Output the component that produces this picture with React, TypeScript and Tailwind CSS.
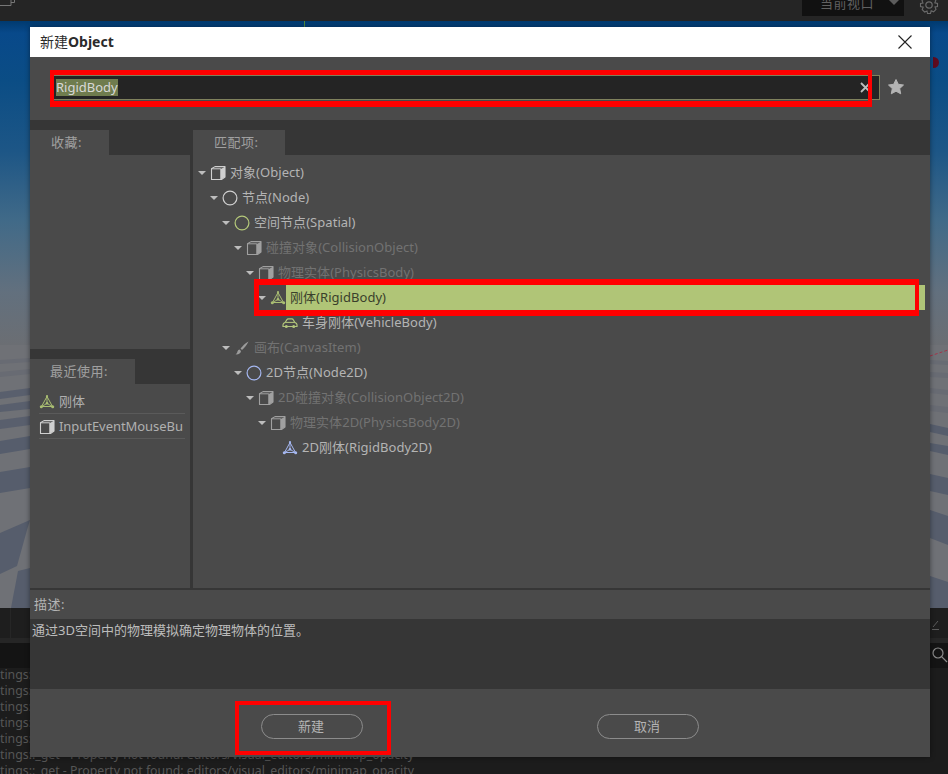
import React from "react";

const FONT = "[font-family:'Noto_Sans','Noto_Sans_CJK_SC',sans-serif]";

function Cube({ dim = false }: { dim?: boolean }) {
  const c = dim ? "#a0a0a0" : "#cfcfcf";
  return (
    <svg width="16" height="16" viewBox="0 0 16 16" className="shrink-0">
      <path d="M1.5 3.8 L5 1.6 H15 V12 L11.5 14.5 H1.5 Z" fill="none" stroke={c} strokeWidth="1.1" strokeLinejoin="round" />
      <path d="M10.8 4 L15 1.8 V12 L10.8 14.5 Z" fill={c} />
      <path d="M1.5 3.8 H10.8 V14.5" fill="none" stroke={c} strokeWidth="1" />
    </svg>
  );
}

function Ring({ color }: { color: string }) {
  return (
    <svg width="16" height="16" viewBox="0 0 16 16" className="shrink-0">
      <circle cx="8" cy="8" r="6.9" fill="none" stroke={color} strokeWidth="1.2" />
    </svg>
  );
}

function Rigid({ color }: { color: string }) {
  return (
    <svg width="16" height="16" viewBox="0 0 16 16" className="shrink-0">
      <path d="M8 2.5 L13.5 12.5 H2.5 Z" fill="none" stroke={color} strokeWidth="1" />
      <path d="M8 2.5 V9.5 M8 9.5 L2.5 12.5 M8 9.5 L13.5 12.5" stroke={color} strokeWidth="0.9" fill="none" />
      <circle cx="8" cy="2.2" r="1.1" fill={color} />
      <circle cx="2.3" cy="12.8" r="1.5" fill={color} />
      <circle cx="13.7" cy="12.8" r="1.5" fill={color} />
      <circle cx="8" cy="9.2" r="1.3" fill={color} />
    </svg>
  );
}

function CarIcon() {
  const c = "#b3c77c";
  return (
    <svg width="16" height="16" viewBox="0 0 16 16" className="shrink-0">
      <path d="M1 9.8 C1 8.4 2.2 7.6 3.3 7.3 L4.8 4.8 C5.2 4.1 5.8 3.8 6.4 3.8 H9.8 C10.4 3.8 11 4.1 11.3 4.8 L12.7 7.3 C13.8 7.6 15 8.4 15 9.8 V11.5 H1 Z" fill="none" stroke={c} strokeWidth="1.2" />
      <path d="M3.4 7.4 H12.6" stroke={c} strokeWidth="1" />
      <circle cx="4.3" cy="11.4" r="1.5" fill={c} />
      <circle cx="11.7" cy="11.4" r="1.5" fill={c} />
    </svg>
  );
}

function BrushIcon() {
  return (
    <svg width="16" height="16" viewBox="0 0 16 16" className="shrink-0">
      <path d="M14.5 1.5 C11 3.5 8.5 6 6.5 8.5 L8 10 C10.5 8 12.8 5 14.5 1.5 Z" fill="#9c9c9c" />
      <path d="M5.5 9.5 C3.5 10 3.5 12 3 13 C2.8 13.5 2 14 1.5 14.3 C4 14.8 6.8 13.5 7 11 Z" fill="#9c9c9c" />
    </svg>
  );
}

type Row = { depth: number; icon: React.ReactNode; text: string; dim?: boolean; leaf?: boolean; selected?: boolean };

const rows: Row[] = [
  { depth: 0, icon: <Cube />, text: "对象(Object)" },
  { depth: 1, icon: <Ring color="#d0d0d0" />, text: "节点(Node)" },
  { depth: 2, icon: <Ring color="#b5c97a" />, text: "空间节点(Spatial)" },
  { depth: 3, icon: <Cube dim />, text: "碰撞对象(CollisionObject)", dim: true },
  { depth: 4, icon: <Cube dim />, text: "物理实体(PhysicsBody)", dim: true },
  { depth: 5, icon: <Rigid color="#a9bd72" />, text: "刚体(RigidBody)", selected: true },
  { depth: 6, icon: <CarIcon />, text: "车身刚体(VehicleBody)", leaf: true },
  { depth: 2, icon: <BrushIcon />, text: "画布(CanvasItem)", dim: true },
  { depth: 3, icon: <Ring color="#a5b7f0" />, text: "2D节点(Node2D)" },
  { depth: 4, icon: <Cube dim />, text: "2D碰撞对象(CollisionObject2D)", dim: true },
  { depth: 5, icon: <Cube dim />, text: "物理实体2D(PhysicsBody2D)", dim: true },
  { depth: 6, icon: <Rigid color="#a5b7f0" />, text: "2D刚体(RigidBody2D)", leaf: true },
];

function TreeRow({ row }: { row: Row }) {
  return (
    <div className="flex h-[25px] items-center tracking-[0.04px]" style={{ paddingLeft: 5 + row.depth * 12 }}>
      <span className="flex w-[12px] shrink-0 justify-start">
        {!row.leaf && <span className="mt-px h-0 w-0 border-x-[4px] border-t-[4px] border-x-transparent border-t-[#bdbdbd]" />}
      </span>
      <span className="flex w-[15px] shrink-0 justify-start">{row.icon}</span>
      {row.selected ? (
        <span className="ml-[1px] flex h-[25px] flex-1 items-center bg-[#b0c577] pl-[4px] pr-0 text-[#3a3f2c]">{row.text}</span>
      ) : (
        <span className={`ml-[5px] whitespace-nowrap ${row.dim ? "text-[#727272]" : "text-[#b4b4b4]"}`}>{row.text}</span>
      )}
    </div>
  );
}

function Tab({ label, w, pl }: { label: string; w: string; pl: string }) {
  return (
    <div className={`flex h-[25px] items-center ${w} ${pl} bg-[#4a4a4a] tracking-[0.5px] text-[#a0a0a0]`}>{label}</div>
  );
}

function Floor() {
  const D = "#565d6c";
  return (
    <div className="h-[263px] shrink-0 bg-[#6f7176]">
      <svg width="948" height="263" viewBox="0 345 948 263" className="block">
        <g fill="#686b73">
          <path d="M0 360 L30 358 V362 L0 364 Z" />
          <path d="M0 372 L30 369 V374 L0 377 Z" />
          <path d="M930 360 L948 361 V365 L930 364 Z" />
          <path d="M930 372 L948 373 V378 L930 377 Z" />
          <path d="M930 388 L948 390 V395 L930 393 Z" />
          <path d="M930 405 L948 407 V413 L930 411 Z" />
        </g>
        <g fill={D} opacity="0.85">
          <path d="M0 392 L30 388 V395 L0 399 Z" />
          <path d="M0 405 L30 401 V409 L0 412 Z" />
          <path d="M0 420 L30 416 V425 L0 429 Z" />
        </g>
        <g fill={D}>
          <path d="M0 441 L30 436 V449 L0 454 Z" />
          <path d="M0 472 L30 467 V488 L0 493 Z" />
          <path d="M0 533 L30 520 L27 530 L17 566 L0 574 Z" />
          <path d="M18 571 L30 568 V608 L11 608 Z" />
          <path d="M930 424 L948 428 V436 L930 432 Z" />
          <path d="M930 443 L948 446 V455 L930 451 Z" />
          <path d="M930 474 L948 478 V495 L930 491 Z" />
          <path d="M930 510 L948 516 V545 L930 538 Z" />
          <path d="M930 576 L948 582 V608 L930 608 Z" />
        </g>
        <path d="M930 356 L948 350" stroke="#a3354a" strokeWidth="1" strokeDasharray="3 2" />
      </svg>
    </div>
  );
}

function Background() {
  const log = "tings::_get - Property not found: editors/visual_editors/minimap_opacity";
  return (
    <div className="flex h-full w-full flex-col bg-[#1c1c1c]">
      <div className="relative flex h-[21px] shrink-0 items-start justify-end overflow-hidden bg-[#252525]">
        <svg width="16" height="7" viewBox="0 0 16 7" className="absolute left-0 top-0">
          <path d="M0 5.5 H11 V0 M11 2.5 H14.5 V0" fill="none" stroke="#777" strokeWidth="1" />
        </svg>
        <div className="relative mr-[44px] flex h-[16px] w-[102px] items-center overflow-hidden bg-[#111111] pl-[18px]">
          <span className="-mt-[9px] text-[13px] tracking-[0.5px] text-[#606060]">当前视口</span>
          <span className="absolute right-[5px] top-0 h-0 w-0 border-x-[5px] border-t-[5px] border-x-transparent border-t-[#5c5c5c]" />
        </div>
        <svg width="20" height="20" viewBox="0 0 20 20" className="absolute left-[919px] -top-[5px]">
          <circle cx="10" cy="10" r="3.2" fill="none" stroke="#6b6b6b" strokeWidth="1.2" />
          <path d="M8.5 1.5 H11.5 L12 4 L14.4 3 L16.8 5.4 L15.8 7.8 L18.5 8.5 V11.5 L16 12 L17 14.4 L14.6 16.8 L12.2 15.8 L11.5 18.5 H8.5 L8 16 L5.6 17 L3.2 14.6 L4.2 12.2 L1.5 11.5 V8.5 L4 8 L3 5.6 L5.4 3.2 L7.8 4.2 Z" fill="none" stroke="#6b6b6b" strokeWidth="1.1" />
        </svg>
      </div>
      <div className="relative h-[324px] shrink-0 bg-[linear-gradient(180deg,#003a6f_0px,#08498a_12px,#0b4d85_60px,#1d5686_130px,#416a88_200px,#62707e_270px,#6b6e73_324px)]">
        <span className="absolute left-[304px] top-0 h-[6px] w-px bg-[#4f8a3c]" />
        <span className="absolute left-[933px] top-[36px] h-[11px] w-[6px] rounded-r-full bg-[#5e0b1f]" />
      </div>
      <Floor />
      <div className="relative flex h-[30px] shrink-0 bg-[#1e1e1e]">
        <span className="ml-[10px] h-full w-px bg-[#262626]" />
        <svg width="10" height="10" viewBox="0 0 10 10" className="absolute left-[932px] top-[13px]">
          <path d="M6 0 L1 6 M0 8.5 H7" stroke="#5c5c5c" strokeWidth="1" fill="none" />
        </svg>
      </div>
      <div className="h-[5px] shrink-0 bg-[#262626]" />
      <div className="relative h-[25px] shrink-0 bg-[#141414]">
        <svg width="16" height="16" viewBox="0 0 16 16" className="absolute left-[932px] top-[4px]">
          <circle cx="6" cy="6" r="5" fill="none" stroke="#8a8a8a" strokeWidth="1.2" />
          <path d="M9.6 9.6 L15 15" stroke="#8a8a8a" strokeWidth="1.2" />
        </svg>
      </div>
      <div className="flex min-h-0 flex-1 flex-col overflow-hidden text-[12.3px] leading-[16px] text-[#565656]">
        {Array.from({ length: 7 }).map((_, i) => (
          <div key={i} className={`h-[16px] shrink-0 whitespace-nowrap ${i === 0 ? "-mt-px" : ""}`}>{log}</div>
        ))}
      </div>
    </div>
  );
}

export default function App() {
  return (
    <div className={`relative h-[774px] w-[948px] overflow-hidden text-[13px] ${FONT}`}>
      <Background />

      <div className="absolute left-[30px] top-[27px] flex h-[730px] w-[900px] flex-col bg-[#4a4a4a] shadow-[0_0_5px_rgba(0,0,0,0.45)]">
        <div className="flex h-[30px] shrink-0 items-center justify-between bg-white pb-[2px] pl-[10px] pr-[17px]">
          <span className="text-[14px] text-[#2b2b2b]">
            新建<span className="font-bold">Object</span>
          </span>
          <svg width="16" height="16" viewBox="0 0 16 16" className="mt-[2px]">
            <path d="M1.5 1.5 L14.5 14.5 M14.5 1.5 L1.5 14.5" stroke="#222" strokeWidth="1.1" />
          </svg>
        </div>

        <div className="flex h-[63px] shrink-0 items-start pl-[23px] pt-[18px]">
          <div className="flex h-[25px] w-[827px] items-center justify-between border border-[#7f815c] bg-[#242424] pl-[2px] pr-[8px]">
            <span className="flex h-[17px] items-center bg-[#6f7c4e] text-[#d8d8d8]">RigidBody</span>
            <svg width="11" height="11" viewBox="0 0 11 11">
              <path d="M1 1 L10 10 M10 1 L1 10" stroke="#bcbcbc" strokeWidth="1.8" />
            </svg>
          </div>
          <svg width="18" height="18" viewBox="0 0 18 18" className="ml-[7px] mt-[3px]">
            <path d="M9 1.5 L11.3 6.3 L16.5 7 L12.7 10.6 L13.7 15.8 L9 13.2 L4.3 15.8 L5.3 10.6 L1.5 7 L6.7 6.3 Z" fill="#b4b4b4" stroke="#b4b4b4" strokeWidth="1" strokeLinejoin="round" />
          </svg>
        </div>

        <div className="flex h-[468px] shrink-0 gap-[3px] bg-[#363636] pt-[10px]">
          <div className="flex w-[160px] shrink-0 flex-col">
            <Tab label="收藏:" w="w-[79px]" pl="pl-[21px]" />
            <div className="h-[194px] bg-[#4a4a4a]" />
            <div className="mt-[10px]">
              <Tab label="最近使用:" w="w-[105px]" pl="pl-[20px]" />
            </div>
            <div className="flex flex-1 flex-col bg-[#4a4a4a] pl-[9px] pr-[5px] pt-[5px] tracking-[-0.05px]">
              <div className="flex h-[25px] items-center gap-[6px] border-b border-[#5a5a5a] pt-px text-[#b0b0b0]">
                <span className="h-[16px] w-[14px]"><Rigid color="#a9bd72" /></span>
                <span>刚体</span>
              </div>
              <div className="flex h-[25px] items-center gap-[6px] overflow-hidden border-b border-[#5a5a5a] pt-px whitespace-nowrap text-[#b0b0b0]">
                <span className="h-[16px] w-[14px] shrink-0"><Cube /></span>
                <span>InputEventMouseBu</span>
              </div>
            </div>
          </div>
          <div className="flex min-w-0 flex-1 flex-col">
            <Tab label="匹配项:" w="w-[92px]" pl="pl-[21px]" />
            <div className="flex-1 bg-[#4a4a4a] pt-[5px]">
              <div className="pr-[5px]">
                {rows.map((r) => (
                  <TreeRow key={r.text} row={r} />
                ))}
              </div>
            </div>
          </div>
        </div>

        <div className="h-[2px] shrink-0 bg-[#363636]" />
        <div className="flex h-[29px] shrink-0 items-center pl-[4px] tracking-[0.5px] text-[#b4b4b4]">描述:</div>
        <div className="h-[70px] shrink-0 bg-[#363636] pl-[2px] pt-[2px] text-[#bcbcbc]">通过3D空间中的物理模拟确定物理物体的位置。</div>

        <div className="flex flex-1 justify-center gap-[234px] pt-[25px]">
          <button className="h-[25px] w-[102px] rounded-full border-[1.5px] border-[#8c8c8c] pr-[2px] text-[#b4b4b4]">新建</button>
          <button className="h-[25px] w-[102px] rounded-full border-[1.5px] border-[#8c8c8c] pr-[2px] text-[#b4b4b4]">取消</button>
        </div>
      </div>

      <div className="absolute left-[50px] top-[70px] h-[37px] w-[822px] border-x-4 border-b-[6px] border-t-[5px] border-[#ff0000]" />
      <div className="absolute left-[254px] top-[279px] h-[37px] w-[665px] border-x-4 border-y-[6px] border-[#ff0000] border-l-[5px]" />
      <div className="absolute left-[235px] top-[701px] h-[54px] w-[156px] border-4 border-[#ff0000]" />
    </div>
  );
}
